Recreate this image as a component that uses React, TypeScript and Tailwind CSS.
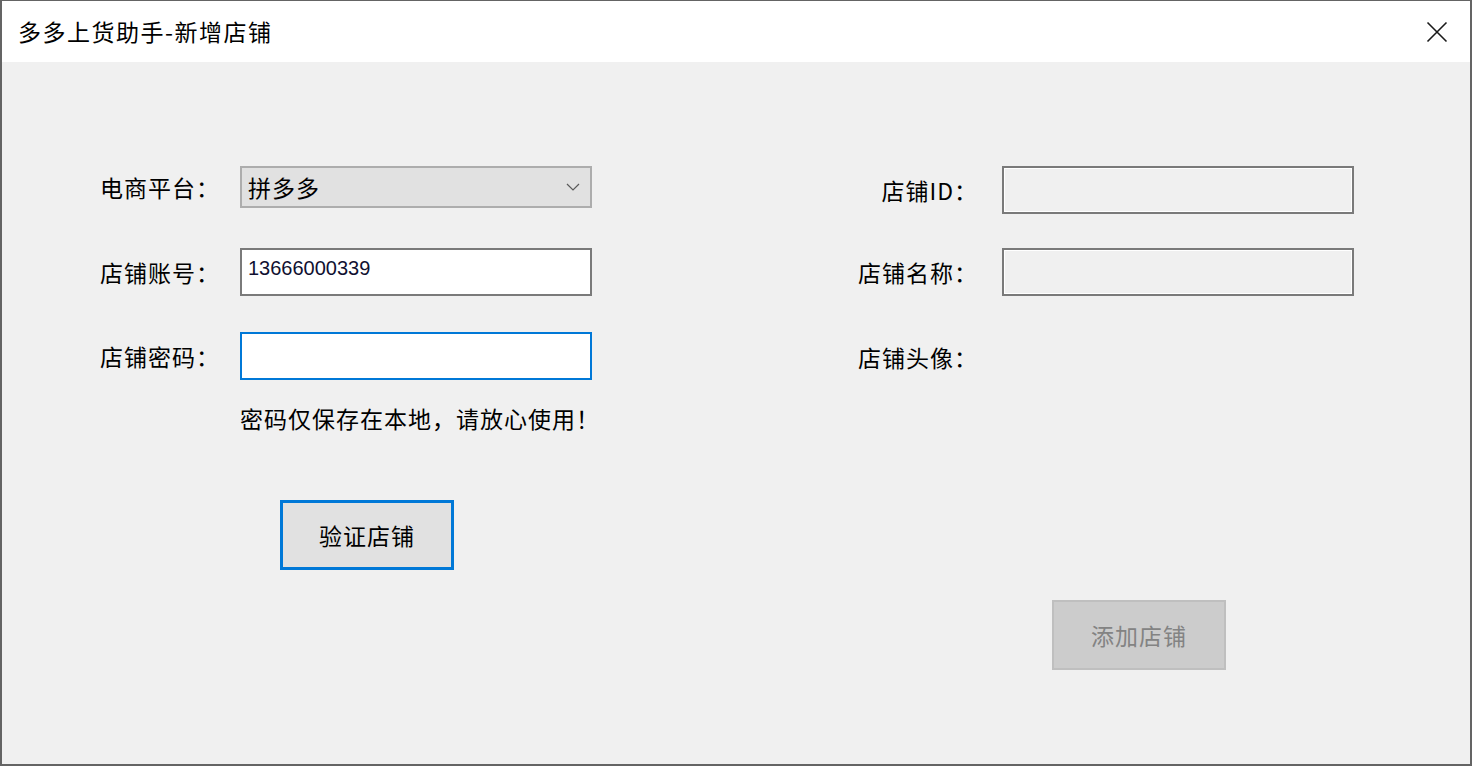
import { useState } from 'react';

const font = { fontFamily: '"Noto Sans CJK SC", "Microsoft YaHei", sans-serif' };

function Field({ label, children, labelClass }: { label: string; children: React.ReactNode; labelClass: string }) {
  return (
    <div className="flex items-center">
      <div className={`${labelClass} text-[23px] tracking-[1px] leading-none text-black whitespace-nowrap`}>{label}</div>
      {children}
    </div>
  );
}

const leftLabel = 'w-[142px] pl-[2px] text-left';
const rightLabel = 'w-[144px] pr-[24px] text-right';

export default function App() {
  const [account, setAccount] = useState('13666000339');
  const [password, setPassword] = useState('');

  return (
    <div
      className="w-[1472px] h-[766px] flex flex-col bg-[#f0f0f0] border-t border-x-2 border-b-2 border-[#646464] overflow-hidden"
      style={font}
    >
      {/* title bar */}
      <div className="h-[61px] bg-white flex items-center justify-between pl-[16px] pr-[22px] shrink-0">
        <span className="text-[23px] text-black tracking-[1.5px]">多多上货助手-新增店铺</span>
        <svg width="22" height="22" viewBox="0 0 22 22" className="text-[#1a1a1a]">
          <path d="M1.5 1.5 L20.5 20.5 M20.5 1.5 L1.5 20.5" stroke="currentColor" strokeWidth="1.6" />
        </svg>
      </div>

      {/* body */}
      <div className="flex pt-[104px] pl-[96px]">
        {/* left column */}
        <div className="w-[760px] flex flex-col">
          <Field label="电商平台：" labelClass={leftLabel}>
            <div className="w-[352px] h-[42px] bg-[#e1e1e1] border-2 border-[#adadad] flex items-center justify-between pl-[6px] pr-[10px]">
              <span className="text-[23px] tracking-[1px] text-black">拼多多</span>
              <svg width="14" height="8" viewBox="0 0 14 8">
                <path d="M1 1 L7 7 L13 1" fill="none" stroke="#5a5a5a" strokeWidth="1.2" />
              </svg>
            </div>
          </Field>

          <div className="mt-[40px]">
            <Field label="店铺账号：" labelClass={leftLabel}>
              <input
                value={account}
                onChange={(e) => setAccount(e.target.value)}
                className="w-[352px] h-[48px] bg-white border-2 border-[#7a7a7a] px-[6px] pb-[8px] text-[20px] text-[#101030] outline-none"
                style={{ fontFamily: '"Liberation Sans", Arial, sans-serif' }}
              />
            </Field>
          </div>

          <div className="mt-[36px]">
            <Field label="店铺密码：" labelClass={leftLabel}>
              <input
                type="password"
                value={password}
                onChange={(e) => setPassword(e.target.value)}
                className="w-[352px] h-[48px] bg-white border-2 border-[#0078d7] px-[6px] text-[18px] outline-none"
              />
            </Field>
          </div>

          <div className="ml-[142px] mt-[26px] text-[23px] leading-[24px] text-black tracking-[1px]">
            密码仅保存在本地，请放心使用！
          </div>

          <button className="ml-[182px] mt-[70px] w-[174px] h-[70px] bg-[#e1e1e1] border-[3px] border-[#0078d7] text-[23px] tracking-[1px] text-black">
            验证店铺
          </button>
        </div>

        {/* right column */}
        <div className="flex flex-col">
          <Field label="店铺ID：" labelClass={rightLabel}>
            <div className="w-[352px] h-[48px] bg-[#f0f0f0] border-2 border-[#7a7a7a] shadow-[inset_0_0_0_1px_#ffffff]" />
          </Field>

          <div className="mt-[34px]">
            <Field label="店铺名称：" labelClass={rightLabel}>
              <div className="w-[352px] h-[48px] bg-[#f0f0f0] border-2 border-[#7a7a7a] shadow-[inset_0_0_0_1px_#ffffff]" />
            </Field>
          </div>

          <div className="mt-[50px] h-[24px]">
            <Field label="店铺头像：" labelClass={rightLabel}>
              <div />
            </Field>
          </div>

          <button
            disabled
            className="ml-[194px] mt-[230px] w-[174px] h-[70px] bg-[#cccccc] border-2 border-[#bfbfbf] text-[23px] tracking-[1px] text-[#838383]"
          >
            添加店铺
          </button>
        </div>
      </div>
    </div>
  );
}
